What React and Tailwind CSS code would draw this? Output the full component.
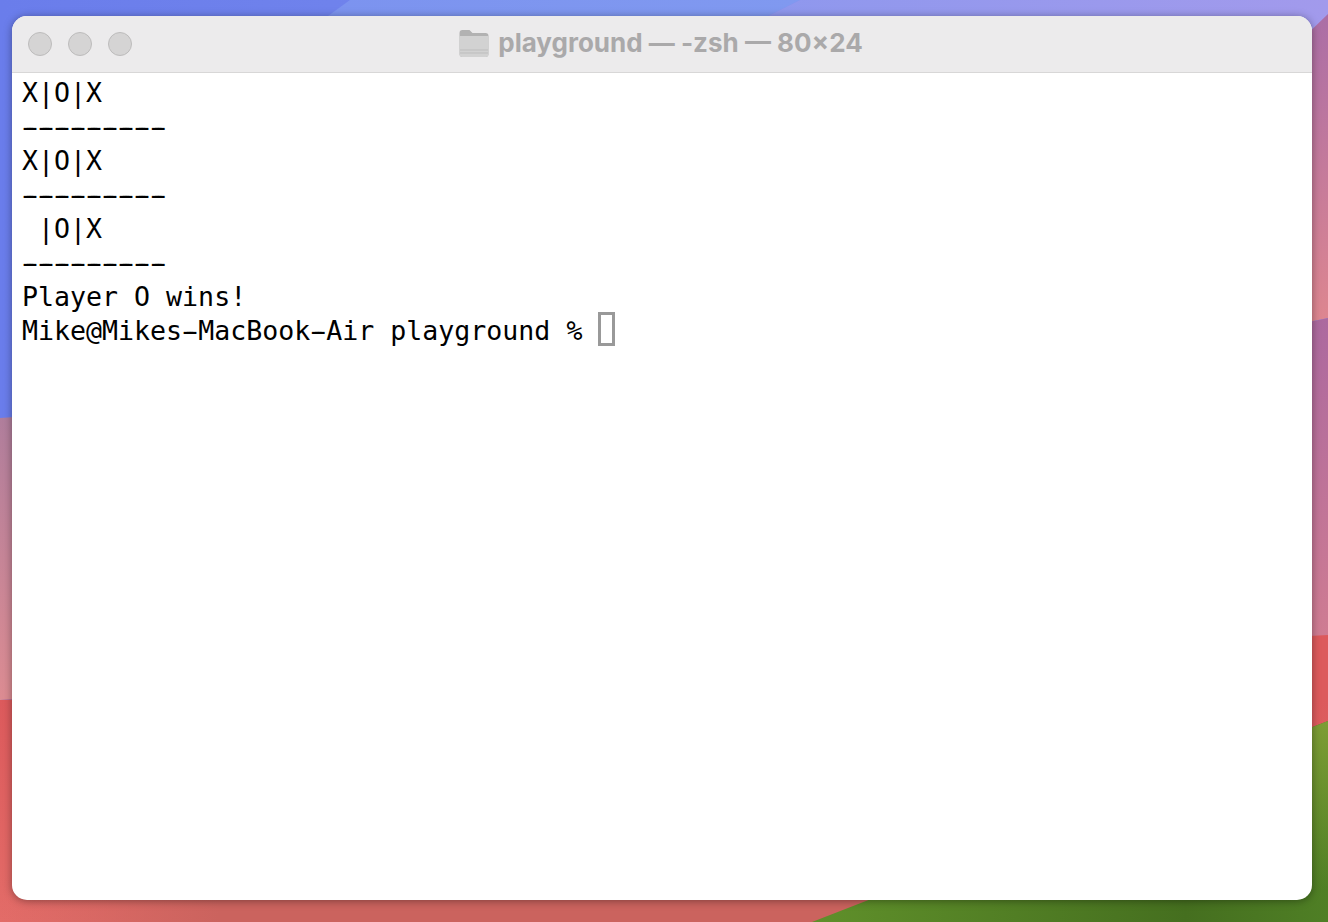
const lines = [
  'X|O|X',
  '---------',
  'X|O|X',
  '---------',
  ' |O|X',
  '---------',
  'Player O wins!',
];

// the terminal font draws long hyphens, smear ours sideways to fill the cell
const TermText = ({ text }) =>
  text.split(/(-)/).map((part, i) =>
    part === '-' ? (
      <span key={i} className="[text-shadow:3px_0_0_#000,-3px_0_0_#000]">-</span>
    ) : (
      <span key={i}>{part}</span>
    )
  );

const Wallpaper = () => (
  <svg className="absolute inset-0 h-full w-full" viewBox="0 0 1328 922" preserveAspectRatio="none">
    <defs>
      <linearGradient id="sky" x1="0" y1="0" x2="1" y2="0">
        <stop offset="0" stopColor="#6a7deb" />
        <stop offset="0.25" stopColor="#6f82ec" />
        <stop offset="1" stopColor="#8b97ee" />
      </linearGradient>
      <linearGradient id="skyBand" x1="0" y1="0" x2="1" y2="0">
        <stop offset="0" stopColor="#7b92ef" />
        <stop offset="1" stopColor="#8099f0" />
      </linearGradient>
      <linearGradient id="skyEnd" x1="0" y1="0" x2="1" y2="0">
        <stop offset="0" stopColor="#8a97ee" />
        <stop offset="1" stopColor="#a29aec" />
      </linearGradient>
      <linearGradient id="waveRight" gradientUnits="userSpaceOnUse" x1="0" y1="14" x2="0" y2="318">
        <stop offset="0" stopColor="#ab6ea6" />
        <stop offset="1" stopColor="#dd8690" />
      </linearGradient>
      <linearGradient id="waveRight2" gradientUnits="userSpaceOnUse" x1="0" y1="318" x2="0" y2="636">
        <stop offset="0" stopColor="#ac699f" />
        <stop offset="1" stopColor="#cf7c92" />
      </linearGradient>
      <linearGradient id="waveLeft" gradientUnits="userSpaceOnUse" x1="0" y1="418" x2="0" y2="700">
        <stop offset="0" stopColor="#b07e9c" />
        <stop offset="1" stopColor="#dc8c92" />
      </linearGradient>
      <linearGradient id="red" gradientUnits="userSpaceOnUse" x1="0" y1="700" x2="0" y2="922">
        <stop offset="0" stopColor="#dc5a5c" />
        <stop offset="1" stopColor="#e36c68" />
      </linearGradient>
      <linearGradient id="redBottom" gradientUnits="userSpaceOnUse" x1="0" y1="0" x2="220" y2="0">
        <stop offset="0" stopColor="#cb635e" stopOpacity="0" />
        <stop offset="1" stopColor="#cb635e" />
      </linearGradient>
      <linearGradient id="green" gradientUnits="userSpaceOnUse" x1="820" y1="0" x2="1328" y2="0">
        <stop offset="0" stopColor="#5f8f2a" />
        <stop offset="0.72" stopColor="#456f1f" />
        <stop offset="1" stopColor="#4f7f25" />
      </linearGradient>
      <linearGradient id="greenTop" gradientUnits="userSpaceOnUse" x1="0" y1="722" x2="0" y2="890">
        <stop offset="0" stopColor="#7d9d34" />
        <stop offset="1" stopColor="#7d9d34" stopOpacity="0" />
      </linearGradient>
    </defs>
    <rect width="1328" height="922" fill="url(#sky)" />
    <path d="M350 0 L800 0 L640 80 L240 80 Z" fill="url(#skyBand)" />
    <path d="M800 0 L1328 0 L1328 80 L640 80 Z" fill="url(#skyEnd)" />
    <path d="M1328 14 L1270 70 L1270 330 L1328 318 Z" fill="url(#waveRight)" />
    <path d="M1270 330 L1328 318 L1328 636 L1270 642 Z" fill="url(#waveRight2)" />
    <path d="M0 418 L120 410 L120 694 L0 700 Z" fill="url(#waveLeft)" />
    <path d="M0 700 L660 670 L1328 635 L1328 922 L0 922 Z" fill="url(#red)" />
    <rect x="0" y="880" width="900" height="42" fill="url(#redBottom)" />
    <path d="M812 922 L1328 721 L1328 922 Z" fill="url(#green)" />
    <path d="M812 922 L1328 721 L1328 922 Z" fill="url(#greenTop)" />
  </svg>
);

export default function App() {
  return (
    <div className="relative h-[922px] w-[1328px] overflow-hidden p-[16px_16px_22px_12px]">
      <Wallpaper />
      <div className="relative flex h-full flex-col overflow-hidden rounded-[15px] bg-white shadow-[0_1px_9px_rgba(0,0,0,0.38)]">
        <div className="relative flex h-[57px] shrink-0 items-center border-b border-[#d8d7d7] bg-[#ecebec] pl-[16px]">
          <div className="flex gap-[16px]">
            <span className="h-[24px] w-[24px] rounded-full border border-[#bdbcbc] bg-[#d5d4d4]" />
            <span className="h-[24px] w-[24px] rounded-full border border-[#bdbcbc] bg-[#d5d4d4]" />
            <span className="h-[24px] w-[24px] rounded-full border border-[#bdbcbc] bg-[#d5d4d4]" />
          </div>
          <div className="flex flex-1 -translate-y-px items-center justify-center gap-[9px] pr-[122px]">
            <svg width="30" height="28" viewBox="0 0 30 28">
              <path d="M0.5 4a3 3 0 0 1 3-3h7l3 3h13a3 3 0 0 1 3 3v18a3 3 0 0 1-3 3h-23a3 3 0 0 1-3-3Z" fill="#b2b2b2" />
              <path d="M0.5 7h29v18a3 3 0 0 1-3 3h-23a3 3 0 0 1-3-3Z" fill="#d2d2d2" />
              <path d="M1 21h28M1 24h28" stroke="#bdbdbd" strokeWidth="1" />
            </svg>
            <span className="font-['Inter',sans-serif] text-[26px] leading-none font-bold whitespace-nowrap text-[#aaa9aa]">
              playground — -zsh — 80×24
            </span>
          </div>
        </div>
        <div className="flex-1 pt-[3px] pl-[10px] font-['DejaVu_Sans_Mono','Liberation_Mono',monospace] text-[26.6px] leading-[34px] text-black">
          {lines.map((line, i) => (
            <div key={i} className="h-[34px] whitespace-pre"><TermText text={line} /></div>
          ))}
          <div className="flex h-[34px] items-start whitespace-pre">
            <span><TermText text="Mike@Mikes-MacBook-Air playground % " /></span>
            <span className="-mt-[2px] h-[34px] w-[17px] border-[3px] border-[#999999]" />
          </div>
        </div>
      </div>
    </div>
  );
}
